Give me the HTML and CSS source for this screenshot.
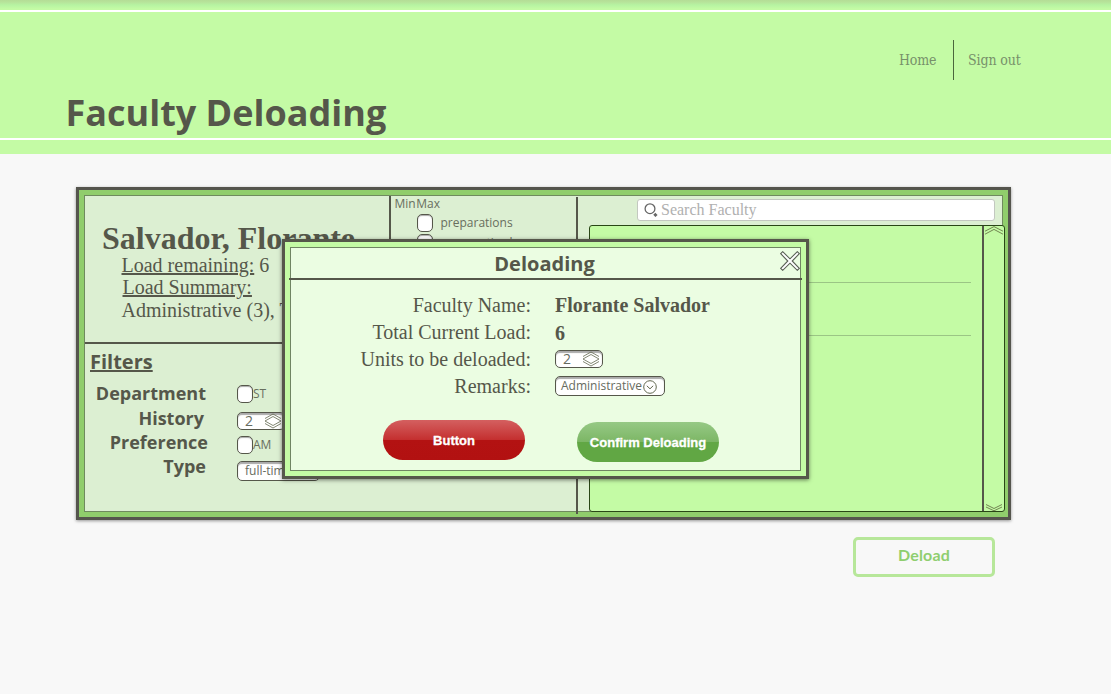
FILE: index.html
```
<!DOCTYPE html>
<html lang="en">
<head>
<meta charset="utf-8">
<title>Faculty Deloading</title>
<link rel="stylesheet" href="styles.css">
</head>
<body>
<header class="header">
  <div class="header-main">
    <h1 class="title">Faculty Deloading</h1>
    <nav class="nav"><a class="nav-home">Home</a><a class="nav-out">Sign out</a></nav>
  </div>
</header>
<main class="main">
  <section class="panel">
    <div class="panel-inner">
      <div class="left">
        <div class="top">
          <div class="person">
            <h2 class="name">Salvador, Florante</h2>
            <p class="fact"><u>Load remaining:</u> 6</p>
            <p class="fact fact-summary"><u>Load Summary:</u></p>
            <p class="fact fact-list">Administrative (3), Teaching</p>
          </div>
          <div class="limits">
            <div class="minmax"><span>Min</span><span>Max</span></div>
            <div class="limit"><span class="check"></span><span>preparations</span></div>
            <div class="limit"><span class="check"></span><span>consecutive hours</span></div>
          </div>
        </div>
        <div class="filters">
          <h3 class="filters-title">Filters</h3>
          <div class="filter"><span class="label department">Department</span><span class="check"></span><span class="opt">ST</span></div>
          <div class="filter"><span class="label history">History</span><span class="spin"><span>2</span><svg class="arrows" viewBox="0 0 18 16"><path d="M1 5.500 9 1l8 4.500M1 8 9 3.500 17 8M1 8l8 4.500L17 8M1 10.500 9 15l8-4.500"/></svg></span></div>
          <div class="filter"><span class="label preference">Preference</span><span class="check"></span><span class="opt">AM</span></div>
          <div class="filter"><span class="label type">Type</span><span class="select select-type"><span>full-time</span></span></div>
        </div>
      </div>
      <div class="right">
        <div class="search"><svg class="lens" viewBox="0 0 14 14"><circle cx="6" cy="5.700" r="4.900"/><path class="handle" d="m10.300 10.800 2.200 2.200"/></svg><span>Search Faculty</span></div>
        <div class="list">
          <div class="rows"><div class="row"></div><div class="row row-next"></div></div>
          <div class="scroll">
            <svg class="chev" viewBox="0 0 20 9"><path d="M1 5.200 10 .6l9 4.600M1 8.200l9-4.800 9 4.800"/></svg>
            <svg class="chev" viewBox="0 0 20 9"><path d="m2 2.500 8 4 8-4M2 5l8 3.800L18 5"/></svg>
          </div>
        </div>
      </div>
    </div>
  </section>
  <button class="deload">Deload</button>
</main>
<div class="modal">
  <div class="modal-inner">
    <div class="modal-head">
      <h2 class="modal-title">Deloading</h2>
      <svg class="close" viewBox="0 0 20 20"><path d="M.7 2.700 2.700.7 10 7.800 17.300.7l2 2L12.200 10l7.100 7.300-2 2L10 12.200l-7.300 7.100-2-2L7.800 10z"/></svg>
    </div>
    <div class="form">
      <span class="key">Faculty Name:</span><b class="val">Florante Salvador</b>
      <span class="key">Total Current Load:</span><b class="val val-load">6</b>
      <span class="key">Units to be deloaded:</span><span class="spin"><span>2</span><svg class="arrows" viewBox="0 0 18 16"><path d="M1 5.500 9 1l8 4.500M1 8 9 3.500 17 8M1 8l8 4.500L17 8M1 10.500 9 15l8-4.500"/></svg></span>
      <span class="key">Remarks:</span><span class="select"><span>Administrative</span><svg class="drop" viewBox="0 0 14 14"><circle cx="7" cy="7" r="6.300"/><path d="M3.800 5.800 7 8.800l3.200-3"/></svg></span>
    </div>
    <div class="actions">
      <button class="pill red">Button</button>
      <button class="pill green">Confirm Deloading</button>
    </div>
  </div>
</div>
</body>
</html>
```
FILE: styles.css
```
* { box-sizing: border-box; }
body { margin: 0; height: 694px; overflow: hidden; position: relative; background: #f8f8f8; color: #55574a; font-family: "Open Sans", sans-serif; }
h1, h2, h3, p { margin: 0; }
button { padding: 0; }
svg { display: block; fill: none; stroke: #62684f; stroke-width: 1; flex: none; }

.header { height: 154px; padding: 10px 0 14px; background: linear-gradient(#b4dd96 0, #b7e39a 2px, #b6f3a2 5px, #c4fba5 9px); }
.header-main { height: 130px; border: solid #fff; border-width: 2px 0; display: flex; justify-content: space-between; padding: 28px 90px 0 65.500px; }
.title { margin-top: 48px; font-size: 36px; line-height: 50px; font-weight: 700; white-space: nowrap; }
.nav { display: flex; height: 40px; line-height: 41px; font-family: "DejaVu Serif Condensed", "DejaVu Serif", serif; font-size: 14px; color: #77906a; }
.nav-home { width: 55px; border-right: 1px solid #4a663c; letter-spacing: -.2px; }
.nav-out { width: 67px; padding-left: 14px; white-space: nowrap; letter-spacing: -.1px; }

.main { padding: 33px 100px 0 76px; }
.panel { width: 935px; height: 333px; border: 3px solid #55554d; padding: 5px; background: #90cd6c; box-shadow: 0 1px 3px rgba(0,0,0,.4); }
.panel-inner { width: 919px; height: 317px; border: 1px solid #6f8a5e; background: #dcefd2; display: flex; }
.left { width: 491px; flex: none; }
.top { height: 148px; display: flex; border-bottom: 2px solid #55574a; }
.person { width: 304px; flex: none; padding: 25px 0 0 17px; overflow: hidden; white-space: nowrap; }
.name { font: 700 32px/34px "Liberation Serif", serif; margin-bottom: -1px; }
.fact { padding-left: 19.500px; font: 20px/22px "Liberation Serif", serif; }
.fact-summary { padding-left: 20.500px; }
.fact-list { padding-top: 1px; }
.limits { width: 187px; border-left: 2px solid #55574a; padding-left: 3.500px; font-size: 12px; color: #686e5e; }
.minmax { display: flex; gap: .5px; line-height: 16px; height: 18px; }
.limit { display: flex; gap: 8px; height: 20px; padding-left: 22.500px; line-height: 18px; }
.limit span + span { margin-left: -.5px; }
.check { width: 16px; height: 18px; flex: none; border: 1px solid #55574a; border-radius: 5px; background: #fff; box-shadow: inset 0 1px 1px #aaa; }
.filters { padding: 5px 0 0 5px; }
.filters-title { font-size: 20px; line-height: 26px; margin-bottom: 10px; text-decoration: underline; }
.filter { height: 25.500px; display: flex; align-items: flex-start; }
.label { width: 147px; text-align: right; font-size: 18px; font-weight: 700; line-height: 20px; }
.department { padding-right: 31px; margin-top: -2px; }
.history { padding-right: 33px; margin-top: -3px; }
.preference { padding-right: 29px; margin-top: -4px; }
.type { padding-right: 31px; margin-top: -6px; }
.filter .spin { margin-top: 1px; }
.opt { font-size: 12px; line-height: 18px; color: #686e5e; }
.spin, .select { display: flex; align-items: center; background: #fff; border: 1px solid #55574a; border-radius: 5px; box-shadow: inset 0 2px 1px #aaa; color: #666b60; }
.spin { width: 48px; height: 18px; justify-content: space-between; padding: 0 2px 0 7px; font-size: 14px; line-height: 16px; }
.arrows { width: 18px; height: 16px; stroke-width: .8; }
.select { width: 110px; height: 20px; padding: 0 5px; gap: 1px; font-size: 12px; line-height: 16px; }
.drop { width: 14px; height: 14px; margin-top: 2px; }
.select-type { width: 83px; padding-left: 7px; margin-top: -1px; }

.right { flex: none; width: 426px; margin: 1px 0 -3px; border-left: 2px solid #55574a; padding: 2px 0 0 11px; }
.search { width: 358px; height: 22px; margin-left: 48px; border: 1px solid #c3c8c0; border-radius: 3px; background: #fff; display: flex; align-items: center; gap: 3px; padding-left: 6px; font: 16px/20px "Liberation Serif", serif; color: #b0b0b0; }
.lens { width: 14px; height: 14px; stroke: #666; stroke-width: 1.300; }
.handle { stroke-width: 3; }
.list { position: relative; width: 416px; height: 287px; margin-top: 4px; border: 1px solid #294616; border-radius: 3px; background: #c4fba5; display: flex; }
.rows { width: 392px; padding-right: 11px; }
.row { height: 57px; border-bottom: 1px solid #9bc585; }
.row-next { height: 53px; }
.scroll { width: 22px; border-left: 2px solid #55574a; display: flex; flex-direction: column; justify-content: space-between; }
.chev { width: 20px; height: 9px; stroke: #718451; }

.deload { display: block; width: 142px; height: 40px; margin: 17px 0 0 777px; border: 3px solid #b7e79a; border-radius: 5px; background: transparent; color: #8fce6f; font: 700 16px/30px Lato, sans-serif; letter-spacing: .2px; padding-bottom: 4px; }

.modal { position: absolute; left: 282px; top: 239px; width: 527px; height: 240px; border: 3px solid #55574a; padding: 5px; background: #c4fba5; box-shadow: 0 1px 4px rgba(0,0,0,.5); }
.modal-inner { width: 511px; height: 224px; border: 1px solid #708563; background: #ebfde2; }
.modal-head { height: 32px; margin: 0 -2px; padding-right: 2px; border-bottom: 2px solid #55574a; display: grid; grid-template-columns: 1fr 20px; }
.modal-title { font-size: 20px; line-height: 31px; text-align: center; padding-left: 20px; }
.close { width: 20px; height: 20px; margin-top: 3px; fill: #fff; stroke: #596054; stroke-width: 1.100; }
.form { display: grid; grid-template-columns: 240px 1fr; grid-auto-rows: 27px; column-gap: 24px; padding-top: 11px; align-items: center; font: 20px/27px "Liberation Serif", serif; }
.key, .val { padding-top: 2px; white-space: nowrap; }
.key { text-align: right; }
.val-load { padding-top: 4px; }
.form .spin, .form .select { font-family: "Open Sans", sans-serif; }
.actions { display: flex; gap: 52px; padding: 21px 0 0 92px; }
.pill { width: 142px; height: 40px; border: 0; border-radius: 20px; color: #fff; font: 700 13px/40px "Liberation Sans", sans-serif; white-space: nowrap; padding-top: 1px; -webkit-text-stroke: .3px #fff; }
.red { background: linear-gradient(#d46060 0, #c42f2f 50%, #b31212 50%, #b21111 100%); }
.green { margin-top: 2px; background: linear-gradient(#96c985 0, #7cb665 50%, #61a744 50%, #61a744 100%); }
```
